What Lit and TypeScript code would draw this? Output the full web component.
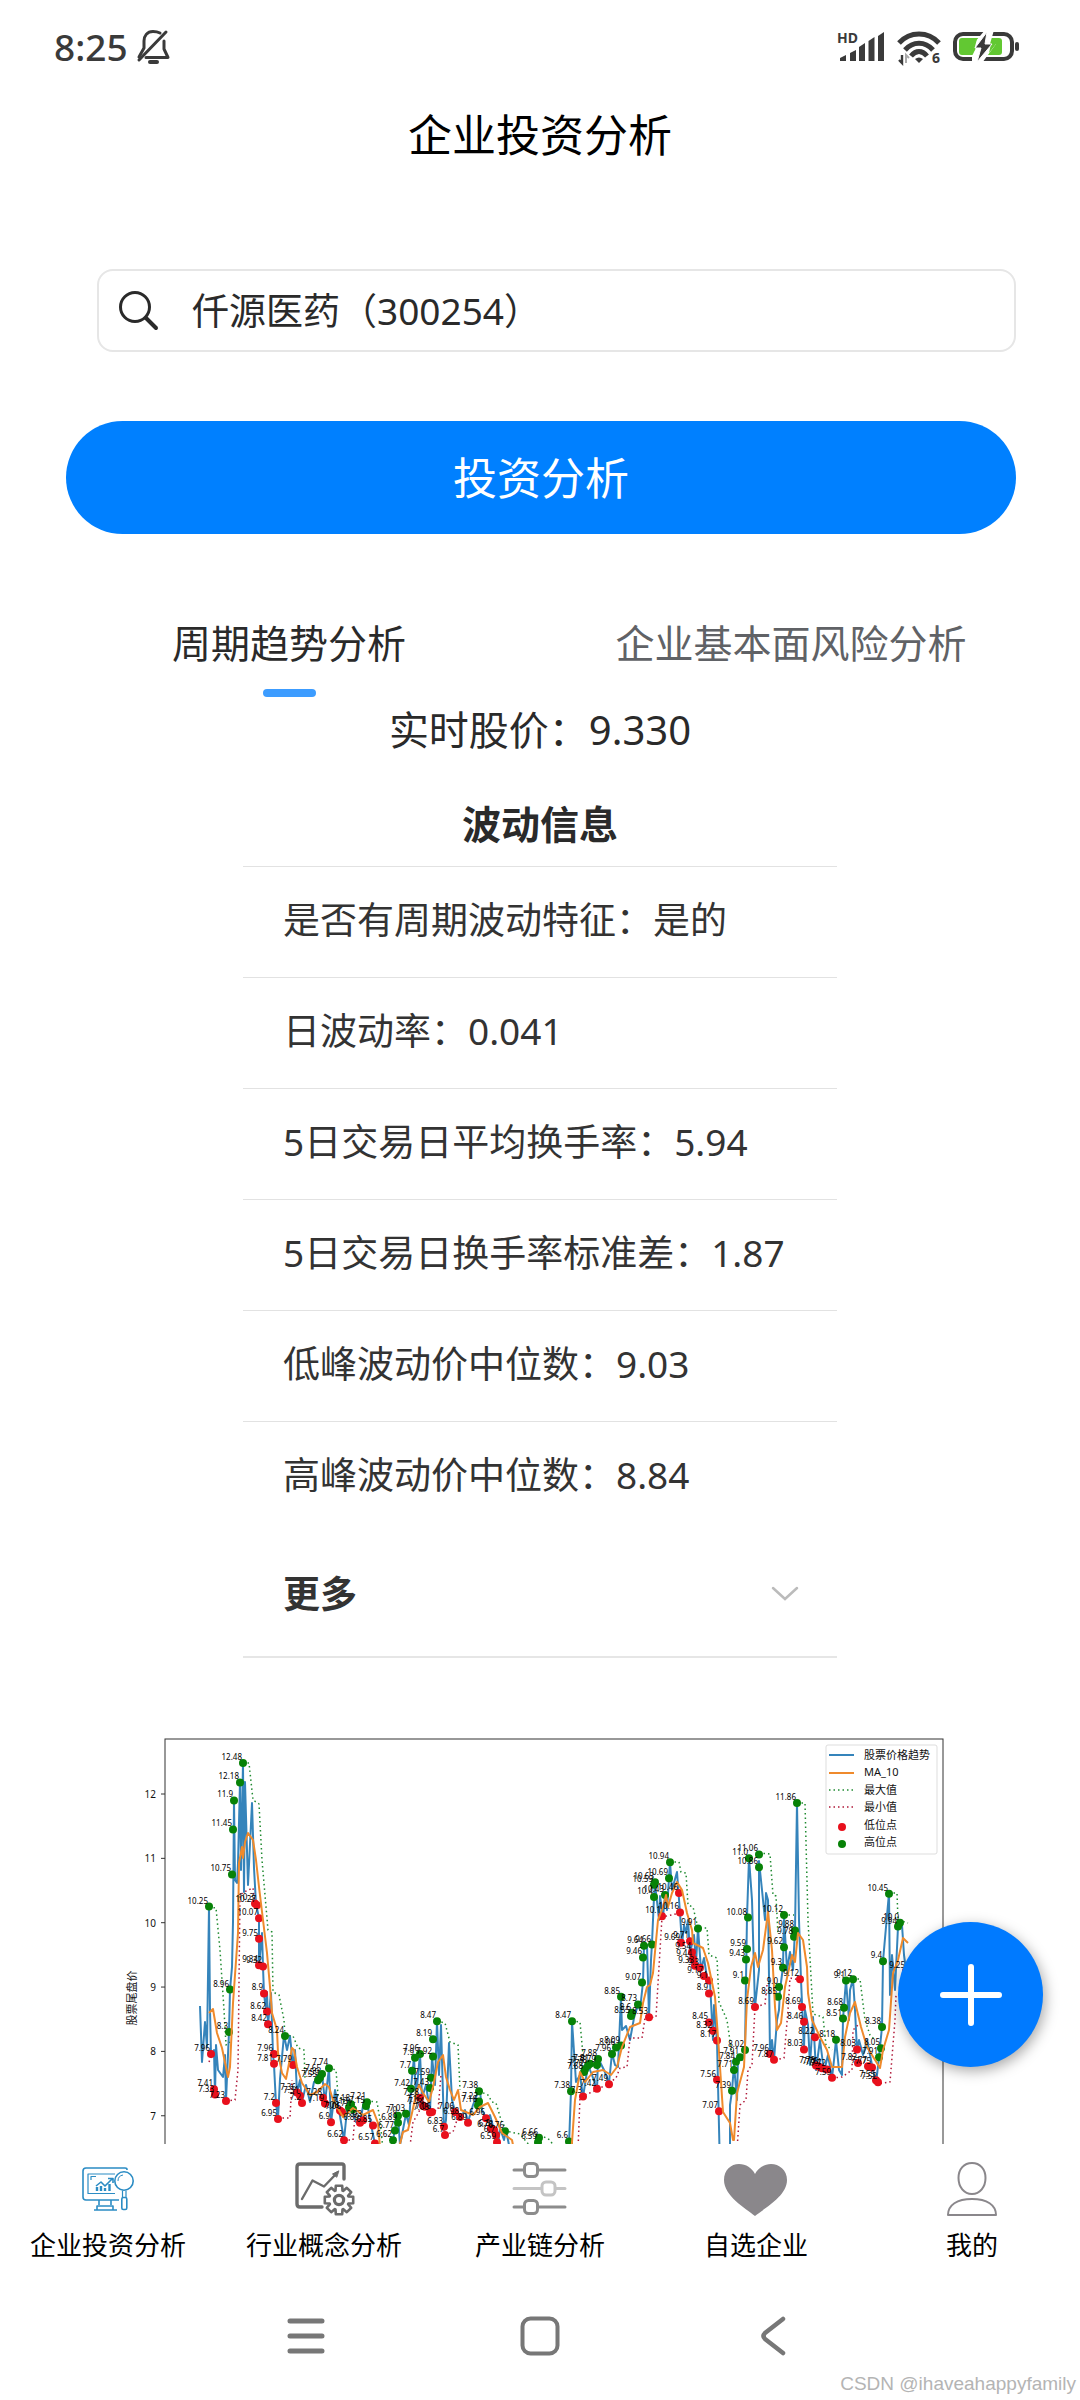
import { LitElement, html, svg, css } from "lit";
import { customElement, property, state } from "lit/decorators.js";
import { classMap } from "lit/directives/class-map.js";

type Point = [number, number];

const UNIT = 64.35;
const yOf = (price: number) => 74 + (12 - price) * UNIT;

/* Local maxima: [x, price] */
const HIGHS: Point[] = [
  [99, 10.25], [120, 8.96], [119, 8.3], [122, 10.75], [123, 11.45], [124, 11.9], [130, 12.18], [133, 12.48],
  [175, 8.24], [208, 7.55], [210, 7.59], [212, 7.65], [219, 7.74], [239, 7.13], [241, 7.18], [243, 7.1], [257, 7.21],
  [256, 7.15], [283, 6.62], [285, 6.77], [288, 6.89], [288, 7.0], [296, 7.03], [301, 7.42], [302, 7.7], [305, 7.9],
  [310, 7.96], [320, 7.43], [321, 7.59], [323, 7.92], [323, 8.19], [327, 8.47], [369, 7.38], [369, 7.22], [368, 7.16],
  [395, 6.76], [429, 6.66], [428, 6.59], [459, 6.6], [461, 7.38], [462, 8.47], [474, 7.68], [475, 7.72], [478, 7.78],
  [480, 7.81], [487, 7.79], [488, 7.88], [502, 7.96], [506, 8.06], [511, 8.09], [511, 8.85], [521, 8.55], [522, 8.6],
  [528, 8.73], [532, 9.07], [533, 9.46], [534, 9.64], [542, 9.66], [544, 10.4], [544, 10.59], [545, 10.63],
  [555, 10.43], [559, 10.69], [560, 10.94], [588, 9.91], [622, 7.39], [624, 7.71], [626, 7.84], [630, 7.91],
  [635, 8.02], [635, 9.1], [636, 9.43], [637, 9.59], [638, 10.08], [639, 11.0], [649, 10.86], [649, 11.06],
  [668, 8.85], [669, 9.0], [673, 9.3], [674, 9.62], [674, 10.12], [684, 9.78], [685, 9.88], [687, 11.86],
  [726, 8.18], [733, 8.51], [734, 8.68], [736, 9.1], [743, 9.12], [769, 7.91], [771, 8.05], [772, 8.38],
  [773, 9.4], [779, 10.45], [788, 9.94], [790, 10.0],
];

/* Local minima: [x, price] */
const LOWS: Point[] = [
  [101, 7.96], [104, 7.41], [105, 7.33], [116, 7.23], [145, 10.3], [147, 10.27], [149, 10.07], [149, 9.75],
  [149, 9.34], [153, 9.32], [154, 8.9], [157, 8.62], [158, 8.42], [164, 7.96], [164, 7.81], [183, 7.79],
  [166, 7.2], [168, 6.95], [187, 7.36], [190, 7.31], [192, 7.2], [213, 7.28], [215, 7.19], [221, 6.9],
  [230, 7.08], [232, 7.06], [234, 6.62], [250, 6.89], [253, 6.93], [263, 6.85], [265, 6.57], [310, 7.28], [313, 7.16],
  [315, 7.14], [320, 7.05], [322, 7.06], [334, 6.83], [335, 6.7], [345, 7.06], [350, 6.98], [358, 6.89],
  [376, 6.96], [381, 6.8], [384, 6.78], [386, 6.7], [387, 6.59], [473, 7.3], [487, 7.42], [499, 7.49],
  [539, 8.53], [552, 10.1], [569, 10.46], [570, 10.16], [571, 9.69], [580, 9.71], [582, 9.54], [583, 9.44], [585, 9.33],
  [590, 9.3], [594, 9.17], [599, 9.1], [599, 8.9], [599, 8.45], [603, 8.32], [607, 8.17], [607, 7.56],
  [609, 7.07], [645, 8.69], [660, 7.96], [664, 7.87], [690, 9.12], [692, 8.69], [694, 8.46], [705, 8.22],
  [694, 8.03], [706, 7.78], [709, 7.76], [712, 7.74], [717, 7.72], [722, 7.59], [747, 8.03], [748, 7.82],
  [758, 7.77], [762, 7.75], [766, 7.55], [768, 7.52], [796, 9.25],
];

const PRICE = [
  "90,286 92,342 95,302 97,327 99,187 100,290 101,334 104,330 105,375 106,325 108,350 113,357 115,335 116,380 119,312 120,270 122,247 123,202 124,80 125,160 127,163 128,143 130,62 131,150 133,43 134,172 135,62 138,165 142,83 144,148 146,184 149,198 149,245 152,213 153,247 154,274 156,290 157,272 158,305 161,273 163,334 164,345 166,384 168,398 170,359 174,315 177,330 180,316 183,346 185,330 187,373 190,360 192,382 196,365 200,382 204,362 208,360 212,354 215,382 219,348 221,403 225,370 229,390 234,420 238,380 241,386 246,402 250,404 254,380 257,381 260,400 265,424 269,450 279,450 283,420 285,409 288,395 290,425 296,394 299,405 301,368 304,337 306,378 310,334 312,378 316,365 320,392 322,337 325,365 327,301 329,355 331,305 334,410 336,400 339,323 342,380 346,395 350,398 355,390 358,402 363,385 368,372 370,371 372,390 376,398 380,395 384,410 388,425 390,408 394,420 396,410 400,430 410,450 424,450 428,418 431,440 456,450 459,425 461,371 462,301 466,362 470,355 473,377 478,345 482,355 487,370 488,338 494,350 499,363 502,333 505,345 508,347 511,277 512,310 516,306 520,320 524,298 528,285 530,290 533,262 534,226 537,225 539,297 541,240 542,223 544,177 545,163 549,200 550,176 553,197 555,176 557,190 559,158 560,142 562,170 567,152 570,193 572,225 574,205 576,213 578,200 580,233 584,215 586,243 588,208 591,250 594,238 597,258 600,262 603,320 604,285 607,321 610,450 620,450 620,385 622,371 624,345 627,380 628,338 632,340 635,331 636,260 637,197 639,138 642,180 645,287 649,250 649,141 652,170 655,200 656,173 658,180 660,334 662,320 664,340 667,300 669,290 670,270 673,247 674,195 677,250 680,232 683,250 685,210 687,83 689,200 691,260 694,329 695,290 698,305 700,345 703,297 706,350 710,320 714,352 718,335 722,358 724,340 726,320 729,350 732,355 733,299 736,260 739,300 740,270 743,259 745,290 747,330 749,320 753,335 757,320 762,345 766,364 769,337 772,307 773,241 779,173 780,275 782,235 785,270 788,207 792,205 794,235 796,250",
];

const AVERAGE = [
  "99,293 103,289 107,313 112,328 118,357 120,347 123,283 128,213 129,143 132,127 133,138 135,122 138,113 143,120 146,140 149,167 153,200 157,233 160,267 162,293 167,310 168,333 172,353 176,359 182,328 184,330 187,347 192,363 200,375 207,372 215,364 219,367 223,380 233,397 243,388 253,395 263,390 268,403 271,440 286,440 293,412 298,410 302,393 307,370 309,365 313,373 319,382 323,367 328,342 333,335 336,357 340,370 344,380 348,370 351,390 363,395 370,387 378,383 385,397 392,413 402,420 408,450 460,450 465,380 470,352 475,362 483,352 493,350 501,355 507,347 512,327 520,307 530,303 533,283 537,267 540,265 543,253 548,200 553,187 556,175 558,187 562,173 567,162 572,170 577,193 582,210 583,223 593,228 598,243 605,277 608,317 610,347 613,392 620,403 623,420 624,420 627,373 634,347 637,280 641,247 645,233 648,247 653,230 658,192 662,230 665,287 667,310 671,303 675,267 682,235 685,242 688,213 693,220 697,247 698,273 702,300 710,317 717,330 722,347 728,347 732,347 735,317 740,293 745,282 751,307 757,327 770,348 773,330 779,310 783,253 788,240 793,218 798,223",
];

const MAXIMA = [
  "99,187 106,188 110,230 114,290 116,325 120,322",
  "133,43 139,43 143,80 149,84 152,140 158,210 162,212 163,272 169,275 174,300 175,315 183,316 188,328 194,330 195,358",
  "219,348 226,350 228,375 236,384",
  "257,381 267,382 270,400 274,440",
  "327,301 335,303 340,322 348,325 350,370",
  "369,371 378,375 382,382 386,383 392,403 400,412 410,414 420,426",
  "430,415 440,420 446,430",
  "462,301 470,302 473,335",
  "560,142 569,142 571,152 576,153 578,185 583,187 588,208 597,208 599,235 607,238 609,282 617,300 622,335",
  "649,133 660,134 663,175 666,176 668,215",
  "674,195 684,195",
  "687,83 695,83 698,200 703,294 713,297 716,325 722,330",
  "743,259 750,259 755,300 760,315 765,320",
  "779,173 787,173 788,200 798,203",
];

const MINIMA = [
  "99,342 104,330",
  "116,381 125,380 128,350 130,175 134,172 143,168 145,184",
  "168,398 180,398 182,360",
  "234,420 243,420 245,395",
  "300,426 303,402 309,392 312,380 320,392 328,390 331,355",
  "335,415 343,412 347,400",
  "468,430 470,377 487,370 499,363 506,358 510,348 517,347 520,318 532,318 535,298 546,297 552,197 570,193",
  "627,430 629,400 630,385 636,380 638,350 642,345 645,287 655,284 657,265",
  "665,340 674,338 678,290 680,258 690,260",
  "722,358 732,357 742,350 743,310 748,305",
  "766,364 780,362 785,300 786,275",
];

@customElement("price-chart")
export class PriceChart extends LitElement {
  static styles = css`
    :host { display: block; }
    .plot { display: block; width: 100%; height: auto; font-family: "Noto Sans", "Noto Sans CJK SC", sans-serif; }
    .frame { fill: none; stroke: #333; stroke-width: 1; }
    .tick { stroke: #333; stroke-width: 1; }
    .axis { font-size: 10px; fill: #111; text-anchor: end; }
    .unit { font-size: 11px; fill: #111; text-anchor: middle; }
    .note { font-size: 8px; fill: #000; text-anchor: end; }
    .price, .average, .maxima, .minima { fill: none; stroke-linejoin: round; }
    .price { stroke: #1f77b4; stroke-width: 2; stroke-opacity: 0.9; }
    .average { stroke: #ef8a2c; stroke-width: 2; }
    .maxima { stroke: #1f8a30; stroke-width: 1.5; stroke-dasharray: 1.5 3; }
    .minima { stroke: #b01838; stroke-width: 1.5; stroke-dasharray: 1.5 3; }
    .high { fill: #078207; }
    .low { fill: #e8101c; }
    .legend { fill: #fff; stroke: #ddd; stroke-width: 1; }
    .legend-text { font-size: 11px; fill: #111; }
  `;

  private lines(name: string, runs: string[]) {
    return runs.map((points) => svg`<polyline class=${name} points=${points} />`);
  }

  private dots(name: string, points: Point[]) {
    return points.map(([x, v]) => svg`<circle class=${name} cx=${x} cy=${yOf(v)} r="4" />`);
  }

  private notes(points: Point[]) {
    return points.map(([x, v]) => svg`<text class="note" x=${x - 1} y=${yOf(v) - 3}>${Number.isInteger(v) ? v.toFixed(1) : v}</text>`);
  }

  render() {
    return html`
      <svg class="plot" viewBox="0 0 860 600" role="img" aria-label="股票价格趋势">
        ${this.lines("price", PRICE)}
        ${this.lines("maxima", MAXIMA)}
        ${this.lines("minima", MINIMA)}
        ${this.dots("low", LOWS)}
        ${this.dots("high", HIGHS)}
        ${this.lines("average", AVERAGE)}
        ${this.notes(HIGHS)}
        ${this.notes(LOWS)}
        <rect class="frame" x="55" y="19" width="778" height="560" />
        ${[12, 11, 10, 9, 8, 7, 6, 5].map(
          (v) => svg`<line class="tick" x1="51" x2="55" y1=${yOf(v)} y2=${yOf(v)} /><text class="axis" x="46" y=${yOf(v) + 4}>${v}</text>`,
        )}
        <text class="unit" transform="translate(26 278) rotate(-90)">股票尾盘价</text>
        <rect class="legend" x="716" y="25" width="111" height="109" rx="2" />
        <line class="price" x1="719" x2="744" y1="35" y2="35" />
        <line class="average" x1="719" x2="744" y1="53" y2="53" />
        <line class="maxima" x1="719" x2="744" y1="70" y2="70" />
        <line class="minima" x1="719" x2="744" y1="87" y2="87" />
        <circle class="low" cx="732" cy="107" r="4" />
        <circle class="high" cx="732" cy="124" r="4" />
        ${["股票价格趋势", "MA_10", "最大值", "最小值", "低位点", "高位点"].map(
          (name, i) => svg`<text class="legend-text" x="754" y=${39 + Math.round(i * 17.4)}>${name}</text>`,
        )}
      </svg>
    `;
  }
}

const GEAR = (() => {
  const pts: string[] = [];
  for (let i = 0; i < 8; i++) {
    const a = (i * Math.PI) / 4 - Math.PI / 2;
    const at = (r: number, d: number) => `${(45 + r * Math.cos(a + d)).toFixed(1)},${(39 + r * Math.sin(a + d)).toFixed(1)}`;
    pts.push(at(10, -0.36), at(14.5, -0.22), at(14.5, 0.22), at(10, 0.36));
  }
  return pts.join(" ");
})();

const TAB_ICONS = {
  monitor: svg`
    <g fill="none" stroke="#2b8cc4" stroke-width="1.6" stroke-linejoin="round">
      <path d="M49 9 V8.500 Q49 7 47 7 H8 Q5 7 5 10 V36 Q5 39 8 39 H41" />
      <path d="M37 13 H10 V32.500 H37" stroke-width="1.200" />
      <path d="M13 19 V15.500 H18" stroke-width="1.200" />
      <path d="M21 39 V44 M33 39 V44 M19 48.500 V45 H35 V48.500 M16 49 H39" />
      <path d="M18 25 L23 21 L27 25 L34 18 M30 17.500 H35 V22" />
      <path d="M19 30 V26 M23 30 V25 M27 30 V27 M31.500 30 V23" stroke-width="2.400" />
      <circle cx="46" cy="20" r="9.200" />
      <path d="M40 20 A6 6 0 0 1 45 14" stroke-width="1" />
      <path d="M44.500 29.500 V36 M48 29.500 V36" stroke-width="1.200" />
      <rect x="43.800" y="36.500" width="5" height="12" rx="1.500" />
    </g>`,
  trend: svg`
    <g fill="none" stroke="#6b6b6b" stroke-width="3.400" stroke-linejoin="round" stroke-linecap="round">
      <path d="M50 18 V5 Q50 3 48 3 H6 Q3 3 3 6 V43 Q3 46 6 46 H28" />
      <path d="M8 38 L18.500 19.500 L30 25.500 L43 12" stroke-width="2.400" />
      <path d="M44.500 10 L38.500 13 L42.500 16 Z" fill="#6b6b6b" stroke-width="1" />
      <polygon points=${GEAR} stroke-width="2.600" />
      <circle cx="45" cy="39" r="4.600" stroke-width="3.200" />
    </g>`,
  sliders: svg`
    <g fill="none" stroke-width="3" stroke-linecap="round">
      <path d="M4 9 H14 M29 9 H55 M4 46 H14 M29 46 H55" stroke="#8c8c8c" />
      <rect x="14.500" y="2.500" width="13" height="13" rx="4" stroke="#8c8c8c" />
      <rect x="14.500" y="39.500" width="13" height="13" rx="4" stroke="#8c8c8c" />
      <path d="M4 27.500 H31 M46 27.500 H55" stroke="#c4c4c4" />
      <rect x="32" y="21" width="13" height="13" rx="4" stroke="#c4c4c4" />
    </g>`,
  heart: svg`<path fill="#8a878b" d="M29 55 C19 47 -2 35 -2 19 C-2 9 5 3 13 3 C20 3 26 7 29 13 C32 7 38 3 45 3 C53 3 61 9 61 19 C61 35 39 47 29 55 Z" />`,
  person: svg`
    <g fill="none" stroke="#8a878b" stroke-width="2" stroke-linejoin="round">
      <path d="M30 2 C38 2 43.500 8 43.500 17 C43.500 26 38 33 30 33 C22 33 16.500 26 16.500 17 C16.500 8 22 2 30 2 Z" />
      <path d="M6 54 C6 44 15 38 30 38 C45 38 54 44 54 54 Z" />
    </g>`,
};

@customElement("tab-bar")
export class TabBar extends LitElement {
  @property({ attribute: false }) items: { icon: keyof typeof TAB_ICONS; label: string }[] = [];

  static styles = css`
    :host { display: block; }
    .bar { display: flex; padding: 17px 0 12px; }
    .item { flex: 1; display: flex; flex-direction: column; align-items: center; gap: 5px; color: #000; text-decoration: none; font-size: 26px; line-height: 38px; white-space: nowrap; }
    .icon { width: 60px; height: 60px; overflow: visible; }
  `;

  render() {
    return html`
      <nav class="bar">
        ${this.items.map(
          (item) => html`<a class="item" href="#${item.icon}"><svg class="icon" viewBox="0 0 60 60" aria-hidden="true">${TAB_ICONS[item.icon]}</svg><span>${item.label}</span></a>`,
        )}
      </nav>
    `;
  }
}

@customElement("status-bar")
export class StatusBar extends LitElement {
  static styles = css`
    :host { display: block; }
    .bar { display: flex; align-items: center; justify-content: space-between; height: 94px; padding: 0 60px 0 54px; box-sizing: border-box; color: #3a3a3a; }
    .side { display: flex; align-items: center; }
    .left { gap: 8px; }
    .right { gap: 12px; }
    .time { font-size: 37px; line-height: 50px; font-weight: 500; }
    .glyph { display: block; overflow: visible; }
    .tiny { font-size: 14px; font-weight: 700; fill: #3a3a3a; }
  `;

  render() {
    return html`
      <div class="bar">
        <div class="side left">
          <span class="time">8:25</span>
          <svg class="glyph" width="34" height="36" viewBox="0 0 34 36" fill="none" stroke="#3a3a3a" stroke-width="3" stroke-linecap="round" stroke-linejoin="round" aria-hidden="true">
            <path d="M24 4 C22 3 20 2.500 17 2.500 C11 2.500 8 7 8 12 V19 L3 28" />
            <path d="M28 12 V20 L32 28.500 H10" />
            <path d="M30 3 L3 31" />
            <path d="M14 33 H21" stroke-width="4" />
          </svg>
        </div>
        <div class="side right">
          <svg class="glyph" width="48" height="34" viewBox="0 0 48 34" aria-hidden="true">
            <text class="tiny" x="0" y="13">HD</text>
            <g fill="#3a3a3a">
              <path d="M3 31 V28 L9 25 V31 Z" /><path d="M13 31 V23 L19 20 V31 Z" /><path d="M22 31 V17 L28 13 V31 Z" />
              <path d="M31.500 31 V11 L37.500 7 V31 Z" /><path d="M41 31 V6 L47 2 V31 Z" />
            </g>
          </svg>
          <svg class="glyph" width="44" height="34" viewBox="0 0 44 34" fill="none" stroke="#3a3a3a" stroke-width="5" aria-hidden="true">
            <path d="M2 13 C13 1 31 1 42 13" /><path d="M8 20 C16 11 28 11 36 20" /><path d="M14 26 C19 20 25 20 30 26" />
            <path d="M18 29 L22 33 L26 29 Q22 26 18 29 Z" fill="#3a3a3a" stroke="none" />
            <path d="M5 25 V33 L2 30" stroke-width="2.400" /><path d="M9 33 V25 L12 28" stroke="#aaa" stroke-width="2" />
            <text class="tiny" x="35" y="33" stroke="none">6</text>
          </svg>
          <svg class="glyph" width="67" height="34" viewBox="0 0 67 34" aria-hidden="true">
            <rect x="2" y="4" width="57" height="25" rx="8" fill="#fff" stroke="#3a3a3a" stroke-width="4" />
            <rect x="6" y="8" width="43" height="17" rx="3" fill="#62c832" />
            <rect x="62" y="12" width="4" height="9" rx="2" fill="#3a3a3a" />
            <path d="M32 0 L17 18 H23 L19 26 V33 H29 L43 14 H37 L41 0 Z" fill="#fff" />
            <path d="M24 9 L16 18 H22 L20 24 M36 23 L43 14 H38 L39 9" fill="#62c832" />
            <path d="M34 2 L22 18 H28 L24 32 L39 14 H32 Z" fill="#3a3a3a" stroke="#fff" stroke-width="1" />
          </svg>
        </div>
      </div>
    `;
  }
}

@customElement("app-root")
export class AppRoot extends LitElement {
  @state() private active = 0;

  private readonly tabs = ["周期趋势分析", "企业基本面风险分析"];

  private readonly facts = [
    "是否有周期波动特征：是的",
    "日波动率：0.041",
    "5日交易日平均换手率：5.94",
    "5日交易日换手率标准差：1.87",
    "低峰波动价中位数：9.03",
    "高峰波动价中位数：8.84",
  ];

  static styles = css`
    :host { display: flex; flex-direction: column; height: 100vh; background: #fff; color: #333; font-family: "Noto Sans", "Noto Sans CJK SC", sans-serif; }
    button { font: inherit; color: inherit; border: 0; background: none; padding: 0; cursor: pointer; }
    .title { margin: 0; color: #000; font-size: 44px; line-height: 82px; font-weight: 400; text-align: center; }
    .stage { position: relative; flex: 1; min-height: 0; }
    .scroll { height: 100%; overflow: hidden auto; scrollbar-width: none; }
    .form { display: flex; flex-direction: column; gap: 69px; padding: 93px 64px 0 66px; }
    .search { display: flex; align-items: center; gap: 32px; margin-left: 31px; padding: 0 19px; border: 2px solid #e6e6e6; border-radius: 16px; }
    .search-icon { flex: none; }
    .field { flex: 1; min-width: 0; box-sizing: border-box; padding: 0 0 4px; border: 0; outline: 0; height: 79px; font: inherit; font-size: 37px; color: #2a2a2a; background: none; }
    .submit { height: 113px; padding-bottom: 4px; border-radius: 57px; background: #0080ff; color: #fff; font-size: 44px; }
    .tabs { display: flex; padding: 80px 38px 0; }
    .tab { flex: 1; display: flex; flex-direction: column; align-items: center; gap: 17px; font-size: 39px; line-height: 58px; color: #606266; white-space: nowrap; }
    .tab::after { content: ""; width: 53px; height: 8px; border-radius: 4px; }
    .tab.on { color: #2a2a2a; }
    .tab.on::after { background: #3c9cff; }
    .price { margin: 8px 0 0; font-size: 40px; line-height: 50px; text-align: center; color: #2a2a2a; }
    .heading { margin: 44px 0 17px; font-size: 39px; line-height: 50px; font-weight: 700; text-align: center; color: #2a2a2a; }
    .card { width: 55%; margin: 0 auto; border-bottom: 2px solid #e6e6e6; font-size: 37px; line-height: 50px; white-space: nowrap; }
    .facts { margin: 0; padding: 0; list-style: none; }
    .fact { padding: 28px 40px 32px; border-top: 1px solid #e2e2e2; }
    .more { display: flex; align-items: center; justify-content: space-between; width: 100%; box-sizing: border-box; padding: 37px 38px 37px 40px; font-weight: 700; }
    .chart { padding: 62px 110px 0; }
    .fab { position: absolute; right: 37px; bottom: 77px; display: grid; place-items: center; width: 145px; height: 145px; border-radius: 50%; background: #007aff; box-shadow: 2px 4px 14px rgba(0, 0, 0, 0.35); }
    .system { display: flex; justify-content: center; align-items: center; gap: 174px; padding: 30px 0 5px; }
    .key { display: grid; place-items: center; width: 60px; height: 60px; }
    .mark { margin: 0; padding: 0 4px 3px 0; text-align: right; font-family: "Liberation Sans", sans-serif; font-size: 19px; line-height: 26px; color: #b4b4b4; }
  `;

  render() {
    return html`
      <status-bar></status-bar>
      <h1 class="title">企业投资分析</h1>
      <main class="stage">
        <div class="scroll">
          <form class="form" @submit=${(e: Event) => e.preventDefault()}>
            <label class="search">
              <svg class="search-icon" width="42" height="42" viewBox="0 0 42 42" fill="none" stroke="#2a2a2a" aria-hidden="true">
                <circle cx="17" cy="17" r="14.500" stroke-width="3" />
                <path d="M28 28 L38 38" stroke-width="4" stroke-linecap="round" />
              </svg>
              <input class="field" type="text" aria-label="企业" .value=${"仟源医药（300254）"} />
            </label>
            <button class="submit" type="submit">投资分析</button>
          </form>
          <div class="tabs" role="tablist">
            ${this.tabs.map(
              (name, i) => html`<button class=${classMap({ tab: true, on: i === this.active })} role="tab" aria-selected=${i === this.active} @click=${() => (this.active = i)}>${name}</button>`,
            )}
          </div>
          <p class="price">实时股价：9.330</p>
          <h2 class="heading">波动信息</h2>
          <section class="card">
            <ul class="facts">
              ${this.facts.map((fact) => html`<li class="fact">${fact}</li>`)}
            </ul>
            <button class="more">
              <span>更多</span>
              <svg width="28" height="16" viewBox="0 0 28 16" fill="none" stroke="#bbb" stroke-width="2.500" stroke-linecap="round" aria-hidden="true"><path d="M2 2 L14 13 L26 2" /></svg>
            </button>
          </section>
          <div class="chart"><price-chart></price-chart></div>
        </div>
        <button class="fab" aria-label="添加">
          <svg width="62" height="62" viewBox="0 0 62 62" stroke="#fff" stroke-width="6" stroke-linecap="round" aria-hidden="true"><path d="M31 3 V59 M3 31 H59" /></svg>
        </button>
      </main>
      <tab-bar
        .items=${[
          { icon: "monitor", label: "企业投资分析" },
          { icon: "trend", label: "行业概念分析" },
          { icon: "sliders", label: "产业链分析" },
          { icon: "heart", label: "自选企业" },
          { icon: "person", label: "我的" },
        ]}
      ></tab-bar>
      <footer>
        <div class="system">
          <button class="key" aria-label="菜单">
            <svg width="40" height="40" viewBox="0 0 40 40" stroke="#777" stroke-width="5" stroke-linecap="round" aria-hidden="true"><path d="M4 5 H36 M4 20 H36 M4 35 H36" /></svg>
          </button>
          <button class="key" aria-label="主页">
            <svg width="40" height="40" viewBox="0 0 40 40" fill="none" stroke="#777" stroke-width="4" aria-hidden="true"><rect x="2.500" y="2.500" width="35" height="35" rx="8" /></svg>
          </button>
          <button class="key" aria-label="返回">
            <svg width="40" height="40" viewBox="0 0 40 40" fill="none" stroke="#777" stroke-width="4.500" stroke-linecap="round" stroke-linejoin="round" aria-hidden="true"><path d="M29 3 L11 17 Q8 20 11 23 L29 37" /></svg>
          </button>
        </div>
        <p class="mark">CSDN @ihaveahappyfamily</p>
      </footer>
    `;
  }
}
